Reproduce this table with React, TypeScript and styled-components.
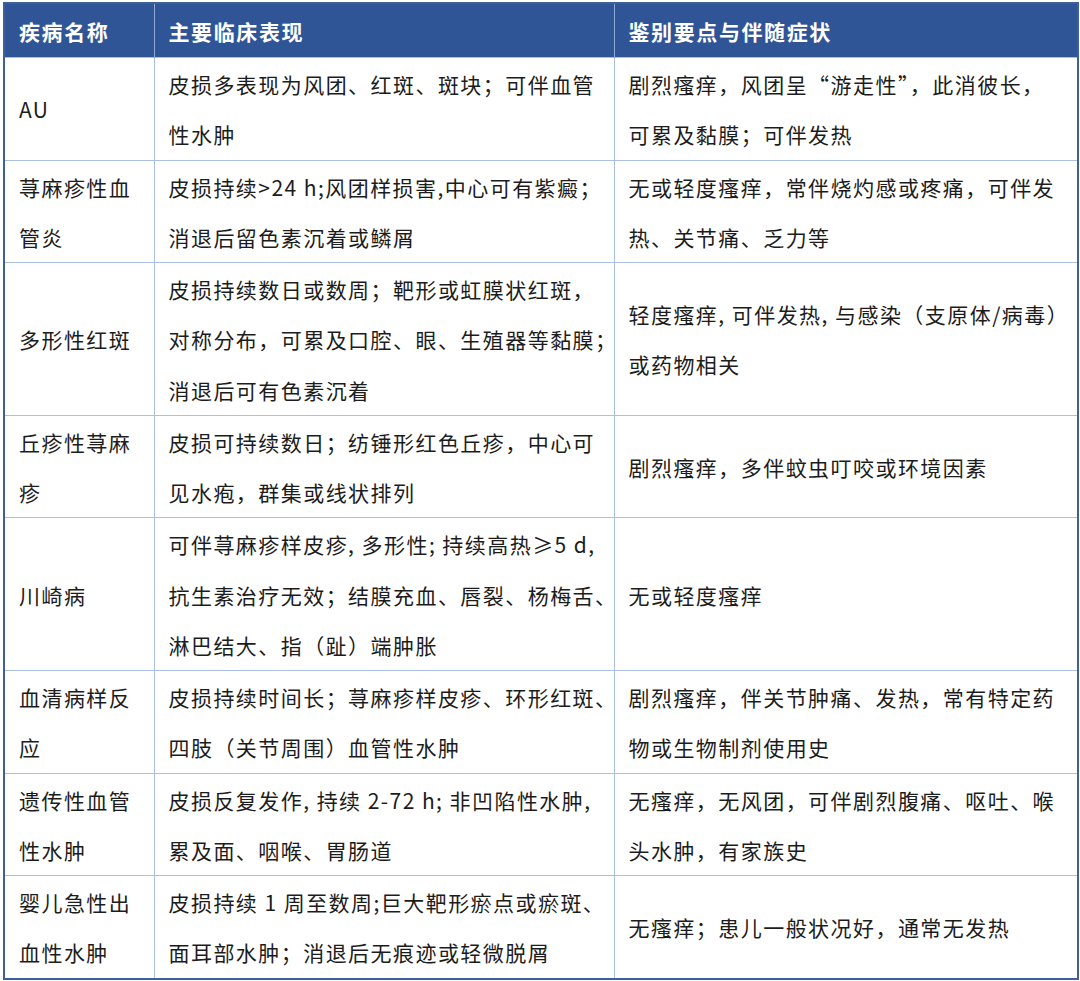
import React from 'react'
import styled, { createGlobalStyle } from 'styled-components'

const GlobalStyle = createGlobalStyle`
    html, body {
        margin: 0;
        padding: 0;
        background: #ffffff;
    }
`;

const Page = styled.div`
    padding: 2px 3px 4px 3px;
    font-family: "Noto Sans CJK SC", "Noto Sans", sans-serif;
`;

const Table = styled.table`
    width: 1074px;
    border-collapse: collapse;
    table-layout: fixed;
    border: 2px solid #3f5f9c;
`;

const Col = styled.col<{ w: number }>`
    width: ${props => props.w}px;
`;

const HeadCell = styled.th`
    box-sizing: border-box;
    background: #2f5597;
    color: #ffffff;
    font-size: 21px;
    font-weight: 700;
    letter-spacing: 1.6px;
    text-align: left;
    line-height: 50px;
    padding: 2px 0 1px 14px;
    border: 1px solid #8ea9d8;
    border-bottom: none;
`;

const Cell = styled.td`
    box-sizing: border-box;
    color: #1c1c1c;
    font-size: 21px;
    letter-spacing: 1.45px;
    line-height: 50.25px;
    padding: 1px 0 0 14px;
    vertical-align: middle;
    border: 1px solid #a9bfe3;
`;

const Line = styled.div`
    white-space: nowrap;
`;

type Row = { name: string[]; signs: string[]; points: string[] };

const rows: Row[] = [
    {
        name: ['AU'],
        signs: ['皮损多表现为风团、红斑、斑块；可伴血管', '性水肿'],
        points: ['剧烈瘙痒，风团呈“游走性”，此消彼长，', '可累及黏膜；可伴发热'],
    },
    {
        name: ['荨麻疹性血', '管炎'],
        signs: ['皮损持续>24 h;风团样损害,中心可有紫癜；', '消退后留色素沉着或鳞屑'],
        points: ['无或轻度瘙痒，常伴烧灼感或疼痛，可伴发', '热、关节痛、乏力等'],
    },
    {
        name: ['多形性红斑'],
        signs: ['皮损持续数日或数周；靶形或虹膜状红斑，', '对称分布，可累及口腔、眼、生殖器等黏膜；', '消退后可有色素沉着'],
        points: ['轻度瘙痒, 可伴发热, 与感染（支原体/病毒）', '或药物相关'],
    },
    {
        name: ['丘疹性荨麻', '疹'],
        signs: ['皮损可持续数日；纺锤形红色丘疹，中心可', '见水疱，群集或线状排列'],
        points: ['剧烈瘙痒，多伴蚊虫叮咬或环境因素'],
    },
    {
        name: ['川崎病'],
        signs: ['可伴荨麻疹样皮疹, 多形性; 持续高热≥5 d,', '抗生素治疗无效；结膜充血、唇裂、杨梅舌、', '淋巴结大、指（趾）端肿胀'],
        points: ['无或轻度瘙痒'],
    },
    {
        name: ['血清病样反', '应'],
        signs: ['皮损持续时间长；荨麻疹样皮疹、环形红斑、', '四肢（关节周围）血管性水肿'],
        points: ['剧烈瘙痒，伴关节肿痛、发热，常有特定药', '物或生物制剂使用史'],
    },
    {
        name: ['遗传性血管', '性水肿'],
        signs: ['皮损反复发作, 持续 2-72 h; 非凹陷性水肿,', '累及面、咽喉、胃肠道'],
        points: ['无瘙痒，无风团，可伴剧烈腹痛、呕吐、喉', '头水肿，有家族史'],
    },
    {
        name: ['婴儿急性出', '血性水肿'],
        signs: ['皮损持续 1 周至数周;巨大靶形瘀点或瘀斑、', '面耳部水肿；消退后无痕迹或轻微脱屑'],
        points: ['无瘙痒；患儿一般状况好，通常无发热'],
    },
];

const Lines = ({ items }: { items: string[] }) => (
    <>
        {items.map((t, i) => <Line key={i}>{t}</Line>)}
    </>
);

const App = () => {
    return (
        <>
            <GlobalStyle />
            <Page>
                <Table>
                    <colgroup>
                        <Col w={150} />
                        <Col w={460} />
                        <Col w={464} />
                    </colgroup>
                    <thead>
                        <tr>
                            <HeadCell>疾病名称</HeadCell>
                            <HeadCell>主要临床表现</HeadCell>
                            <HeadCell>鉴别要点与伴随症状</HeadCell>
                        </tr>
                    </thead>
                    <tbody>
                        {rows.map((r, i) => (
                            <tr key={i}>
                                <Cell><Lines items={r.name} /></Cell>
                                <Cell><Lines items={r.signs} /></Cell>
                                <Cell><Lines items={r.points} /></Cell>
                            </tr>
                        ))}
                    </tbody>
                </Table>
            </Page>
        </>
    );
};

export default App;
